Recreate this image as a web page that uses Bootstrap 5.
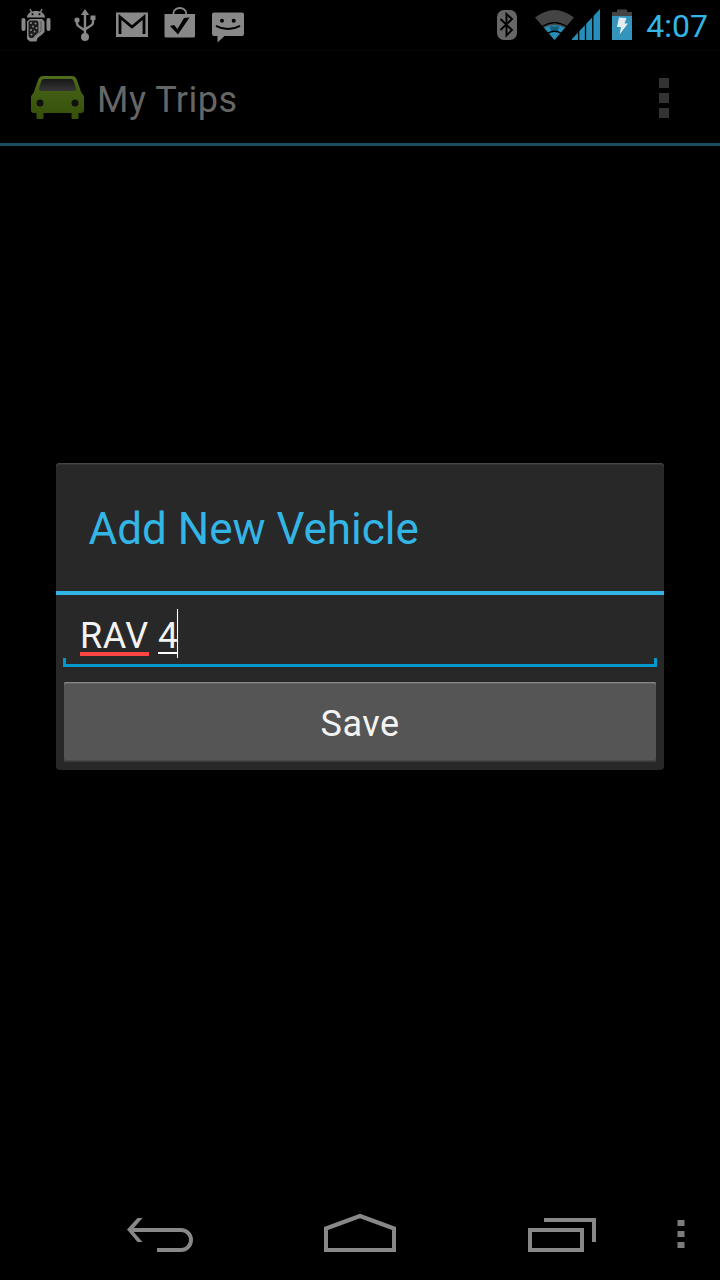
<!DOCTYPE html>
<html lang="en">
<head>
<meta charset="utf-8">
<meta name="viewport" content="width=device-width, initial-scale=1">
<title>My Trips</title>
<link href="https://cdn.jsdelivr.net/npm/bootstrap@5.3.0/dist/css/bootstrap.min.css" rel="stylesheet">
<style>
body{background:#000;font-family:Roboto,sans-serif;width:720px;height:1280px;overflow:hidden}
svg{display:block;flex:none}
.statusbar{height:50px}
.clock{font-size:32px;line-height:52px;color:#33b5e5;padding-right:12px}
.actionbar{height:96px;border-bottom:3px solid #1a4c61;border-top:1px solid #060606}
.app-title{font-size:36px;line-height:98px;color:#666;letter-spacing:.5px}
.stage{height:1044px;padding:317px 56px 0}
.dialog-card{height:307px;background:#282828;border:0;border-radius:4px;box-shadow:inset 0 1px #454545,inset 0 2px #333;--bs-card-bg:#282828}
.dialog-title{height:132px;border-bottom:4px solid #33b5e5;color:#33b5e5;font-size:44px;line-height:132px;padding-left:32.500px}
.field{height:72px;margin:0 7px;padding:14px 0 0 17px;color:#f3f3f3;font-size:36px;line-height:48px}
.field::after{content:"";position:absolute;left:0;right:0;bottom:0;height:9px;border:3px solid #0099cc;border-top:0}
.word{height:47px;line-height:54px;letter-spacing:.5px}
.misspelt{border-bottom:4px solid #ff4444;width:69px}
.composing{border-bottom:2px solid #fff;width:20px;margin-left:9px;height:45px}
.caret{width:1px;height:49px;background:#fff;margin-left:-1px;box-shadow:0 0 1px #777}
.btn-save{height:80px;margin:15px 8px 0;background:#555;border:0;border-radius:2px;color:#f3f3f3;font-size:36px;line-height:85px;letter-spacing:.5px;padding:0;box-shadow:inset 0 1px #898989,inset 0 2px #636363,inset 0 -1px #3b3b3b,inset 0 -2px #484848}
.btn-save:hover{background:#555;color:#f3f3f3}
.navbar-sys{height:90px}
</style>
</head>
<body>
<header class="statusbar d-flex">
  <svg width="60" height="50" viewBox="0 0 60 50" fill="#888">
    <path d="M27 17.500c0-4 4-6.500 9-6.500s9 2.500 9 6.500zM21.500 20a2 2 0 0 1 4 0v9a2 2 0 0 1-4 0zM46.500 20a2 2 0 0 1 4 0v9a2 2 0 0 1-4 0z"/>
    <path d="m30 9 2 4m10-4-2 4" stroke="#888" stroke-width="1.400"/>
    <path d="M30 19h12l2.500 2.500V32l-3 3-4 3-1 3.500H30L27 39V21.500z"/>
    <path d="M30 20.500h7l1.500 1.500v10l-3 3-2.500 3H30l-1.500-2V22z" fill="#1c1c1c"/>
    <g><circle cx="31" cy="23" r="1"/><circle cx="35.500" cy="23.500" r="1"/><circle cx="33" cy="26.500" r="1"/><circle cx="36.500" cy="28" r="1"/><circle cx="31" cy="30" r="1"/><circle cx="34.500" cy="31.500" r="1"/><circle cx="31.500" cy="34.500" r="1"/></g>
    <path d="M41 21v10l-5 4" stroke="#555" fill="none"/>
    <circle cx="32.500" cy="14.200" r="1" fill="#000"/><circle cx="39.500" cy="14.200" r="1" fill="#000"/>
  </svg>
  <svg width="48" height="50" viewBox="60 0 48 50" fill="#888">
    <path d="M85 38V13M77 21v2.500q0 2 2 3l6 4M93 19v3.500q0 2-2 3l-6 4" fill="none" stroke="#888" stroke-width="2.400"/>
    <path d="m85 9 4.200 6h-8.400zM90.500 15.500h5V20h-5z"/><circle cx="77" cy="20" r="2.600"/><circle cx="85" cy="37" r="4"/>
  </svg>
  <svg width="48" height="50" viewBox="108 0 48 50">
    <path d="M116 12.500h32V37h-32z" fill="#888"/><path d="M120 34V17l12 10 12-10v17" fill="none" stroke="#000" stroke-width="2.800"/>
  </svg>
  <svg width="48" height="50" viewBox="156 0 48 50">
    <path d="M173.500 14v-1a6.300 5 0 0 1 12.600 0v1" fill="none" stroke="#888" stroke-width="1.800"/><path d="M164.500 14H195v22q0 1.500-1.500 1.500H166q-1.500 0-1.500-1.500z" fill="#888"/><path d="m170 26 4-1 3.500 4 6.500-11 5.500-.5L178 34.500z" fill="#000"/>
  </svg>
  <svg width="60" height="50" viewBox="204 0 60 50">
    <path d="M214 12.500h28q2 0 2 2v19.500q0 2-2 2h-17.500l-7 6.500V36H214q-2 0-2-2V14.500q0-2 2-2z" fill="#888"/><circle cx="222" cy="20.700" r="2" fill="#000"/><circle cx="233.700" cy="20.700" r="2" fill="#000"/><path d="M216 25.800q12 6.500 24 0" fill="none" stroke="#000" stroke-width="2"/>
  </svg>
  <svg class="ms-auto" width="40" height="50" viewBox="490 0 40 50">
    <rect x="497" y="10" width="20" height="30" rx="7" fill="#666"/><path d="m500.500 19 11.500 11-5.500 5.500V14l5.500 5-11.500 11" fill="none" stroke="#000" stroke-width="1.900"/>
  </svg>
  <svg width="75" height="50" viewBox="530 0 75 50">
    <path d="M554.500 40 535 17.500q19.500-15 39 0z" fill="#444"/>
    <path d="M554.500 40 544 27.500q10.500-5 21 0z" fill="#258fb9"/>
    <path d="M549.500 26.500h10l-2 5h-6z" fill="#175b76"/>
    <path d="M542.500 26.300q12-7.500 24 0M547.500 33.500q7-4.500 14 0" fill="none" stroke="#000" stroke-width="1.300"/>
    <path d="M572 40v-1l28-30v31z" fill="#258fb9"/><path d="M578.700 28v13M585.500 20v21M592.800 12v29" stroke="#000" stroke-width="1.300"/>
  </svg>
  <svg width="41" height="50" viewBox="605 0 41 50">
    <path d="M612 12h5V9.500h10V12h5v4h-20z" fill="#444"/><path d="M612 16h20v24h-20z" fill="#3594bc"/><path d="m619 17.500 7.500.5-2 5.500h3.500l-8.500 11 1.500-7.500h-4z" fill="#e2edf2"/>
  </svg>
  <div class="clock">4:07</div>
</header>

<nav class="actionbar d-flex">
  <svg width="97" height="92" viewBox="0 51 97 92">
    <defs><linearGradient id="body" x2="0" y2="1"><stop stop-color="#506e1c"/><stop offset=".3" stop-color="#436015"/><stop offset="1" stop-color="#354f08"/></linearGradient><linearGradient id="glass" x2="0" y2="1"><stop stop-color="#171717"/><stop offset="1" stop-color="#363636"/></linearGradient></defs>
    <path d="M43 76h29q3 0 4.500 3l3.500 9.500 1 3.500 2.500 3.500q.5 1 .5 2v12.500q0 3-3 3h-2.500v5q0 1-1 1h-5q-1 0-1-1v-5h-28v5q0 1-1 1h-5q-1 0-1-1v-5H34q-3 0-3-3V97.500q0-1 .5-2L34 92l1-3.500L38.500 79q1.500-3 4.500-3z" fill="url(#body)"/>
    <path d="M44 79h27q2 0 2.700 2l2.300 7.500q.5 2.500-2 2.500H41q-2.500 0-2-2.500l2.300-7.500q.7-2 2.700-2z" fill="url(#glass)"/><circle cx="40" cy="103" r="3.500" fill="#101010"/><circle cx="75" cy="103" r="3.500" fill="#101010"/>
  </svg>
  <div class="app-title">My Trips</div>
  <svg class="ms-auto" width="90" height="92" viewBox="630 51 90 92" fill="#333"><path d="M659 78h10v10h-10zM659 93h10v10h-10zM659 108h10v10h-10z"/></svg>
</nav>

<main class="stage">
  <section class="card dialog-card">
    <div class="dialog-title">Add New Vehicle</div>
    <div class="field position-relative d-flex">
      <span class="word misspelt">RAV</span><span class="word composing">4</span><span class="caret"></span>
    </div>
    <button class="btn btn-save" type="button">Save</button>
  </section>
</main>

<footer class="navbar-sys d-flex">
  <svg width="260" height="90" viewBox="0 1190 260 90" fill="none" stroke="#888" stroke-width="4"><path d="M130 1230h51a10 10 0 0 1 0 20h-24"/><path d="M127 1229.500 137.500 1218h5l-10.500 12 10.500 12h-5z" fill="#888" stroke="none"/></svg>
  <svg width="200" height="90" viewBox="260 1190 200 90" fill="none" stroke="#888" stroke-width="4"><path d="M326 1250v-21.500l34-12.500 34 12.500V1250z"/></svg>
  <svg width="180" height="90" viewBox="460 1190 180 90" fill="none" stroke="#888" stroke-width="4"><path d="M530 1230h52v20h-52zM544 1220h50v22"/></svg>
  <svg width="80" height="90" viewBox="640 1190 80 90" fill="#7c7c7c"><path d="M677.500 1220h7v6h-7zM677.500 1231h7v6h-7zM677.500 1242h7v6h-7z"/></svg>
</footer>
<script src="https://cdn.jsdelivr.net/npm/bootstrap@5.3.0/dist/js/bootstrap.bundle.min.js"></script>
</body>
</html>
